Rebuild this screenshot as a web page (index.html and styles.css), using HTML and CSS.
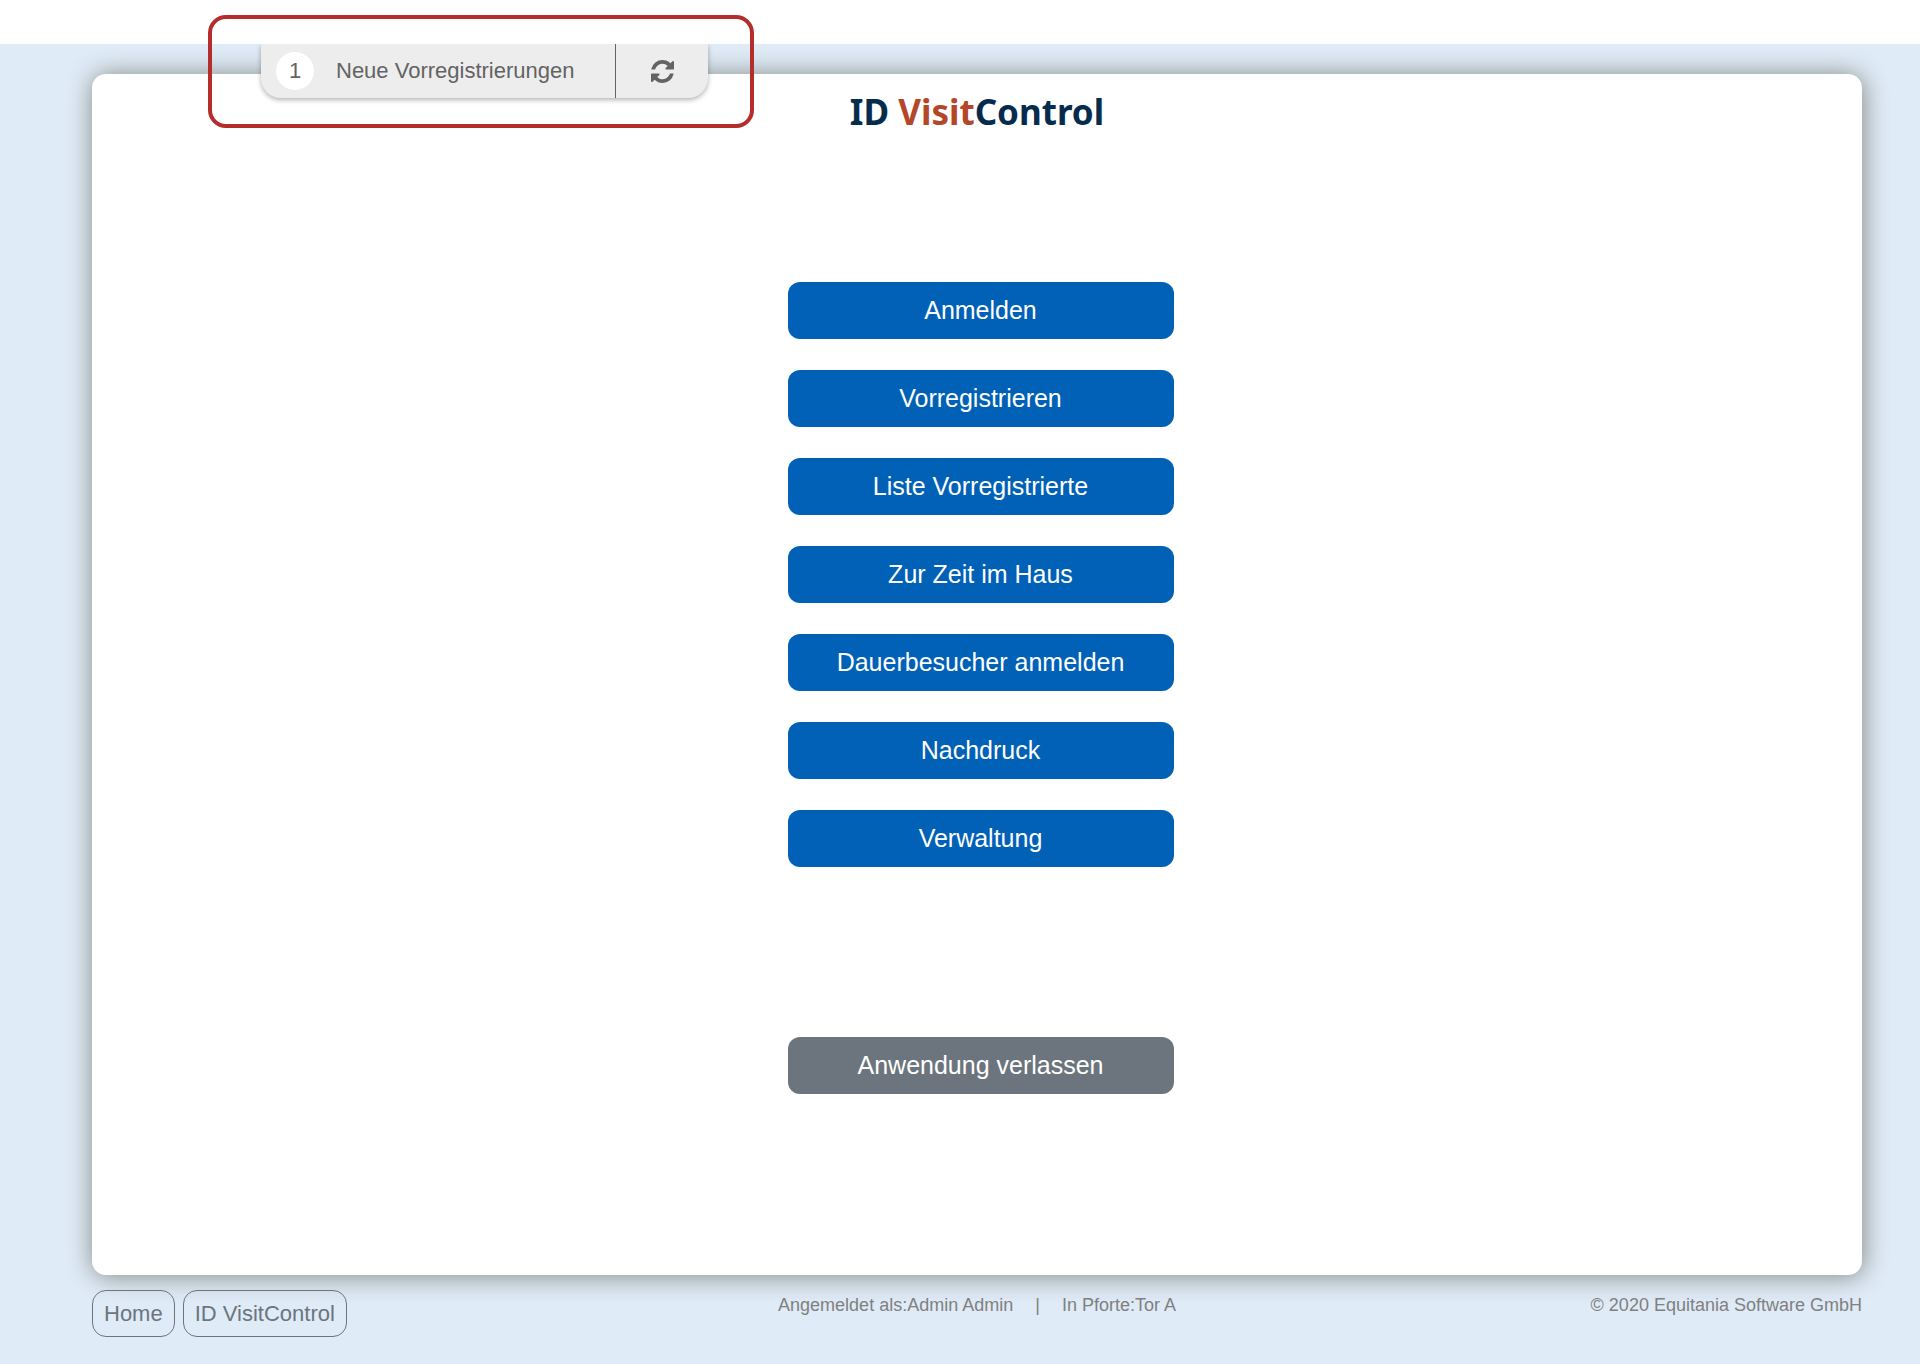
FILE: index.html
```html
<!DOCTYPE html>
<html lang="de">
  <head>
    <meta charset="utf-8">
    <title>ID VisitControl</title>
    <link rel="stylesheet" href="styles.css">
  </head>

  <body>
    <div class="topbar"></div>
    <div class="page">
      <div class="highlight">
        <div class="notice">
          <button class="notice-text" type="button">
            <span class="count">1</span>
            <span>Neue Vorregistrierungen</span>
          </button>
          <button class="refresh" type="button" aria-label="Aktualisieren">
            <svg viewBox="0 0 1536 1536" width="23" height="23">
              <path fill="currentColor" d="M1511 928q0 5-1 7-64 268-268 434.500T764 1536q-146 0-282.500-55T238 1324l-129 129q-19 19-45 19t-45-19-19-45V960q0-26 19-45t45-19h448q26 0 45 19t19 45-19 45l-137 137q71 66 161 102t187 36q134 0 250-65t186-179q11-17 53-117 8-23 30-23h192q13 0 22.500 9.500t9.500 22.500zm25-800v448q0 26-19 45t-45 19h-448q-26 0-45-19t-19-45 19-45l138-138Q969 256 768 256q-134 0-250 65T332 500q-11 17-53 117-8 23-30 23H50q-13 0-22.500-9.500T18 608v-7q65-268 270-434.500T768 0q146 0 284 55.500T1297 212l130-129q19-19 45-19t45 19 19 45z"/>
            </svg>
          </button>
        </div>
      </div>

      <main class="card">
        <h1 class="logo">ID <span>Visit</span>Control</h1>
        <nav class="menu">
          <button class="btn" type="button">Anmelden</button>
          <button class="btn" type="button">Vorregistrieren</button>
          <button class="btn" type="button">Liste Vorregistrierte</button>
          <button class="btn" type="button">Zur Zeit im Haus</button>
          <button class="btn" type="button">Dauerbesucher anmelden</button>
          <button class="btn" type="button">Nachdruck</button>
          <button class="btn" type="button">Verwaltung</button>
          <button class="btn exit" type="button">Anwendung verlassen</button>
        </nav>
      </main>

      <footer class="footer">
        <div class="crumbs">
          <a class="crumb" href="#">Home</a>
          <a class="crumb" href="#">ID VisitControl</a>
        </div>
        <div class="status">
          <span>Angemeldet als:Admin Admin</span>
          <span>|</span>
          <span>In Pforte:Tor A</span>
        </div>
        <div class="copyright">© 2020 Equitania Software GmbH</div>
      </footer>
    </div>
  </body>
</html>
```
FILE: styles.css
```css
* {
  box-sizing: border-box;
}

body {
  margin: 0;
  min-height: 100vh;
  display: flex;
  flex-direction: column;
  background-color: white;
  font-family: "Liberation Sans", Arial, sans-serif;
}

button {
  border: none;
  font-family: inherit;
  cursor: pointer;
}

.topbar {
  height: 44px;
}

.page {
  position: relative;
  flex: 1;
  display: flex;
  flex-direction: column;
  padding: 30px 58px 0 92px;
  background-color: #dfebf7;
}

/* red frame around the notice tab, lies over the card */
.highlight {
  position: absolute;
  top: -29px;
  left: 208px;
  z-index: 1;
  padding: 25px 42px 26px 49px;
  border: 4px solid #b42d2a;
  border-radius: 18px;
}

.notice {
  display: flex;
  height: 54px;
  border-radius: 0 0 20px 20px;
  background-color: #ededed;
  box-shadow: 0 2px 5px rgba(0, 0, 0, 0.3);
  clip-path: inset(0 -10px -10px -10px);
}

.notice-text {
  display: flex;
  align-items: center;
  gap: 22px;
  padding: 0 41px 0 15px;
  background: none;
  color: #636363;
  font-size: 22px;
}

.count {
  width: 38px;
  height: 38px;
  border-radius: 50%;
  background-color: white;
  line-height: 38px;
}

.refresh {
  display: flex;
  align-items: center;
  justify-content: center;
  width: 93px;
  padding: 0;
  border-left: 1px solid #636363;
  background: none;
  color: #636363;
}

.card {
  flex: 1;
  display: flex;
  flex-direction: column;
  align-items: center;
  padding: 16px 0 180px;
  border-radius: 14px;
  background-color: white;
  box-shadow: 1px 1px 26px #838680;
}

.logo {
  margin: 0;
  color: #062b4c;
  font-family: "Noto Sans", sans-serif;
  font-size: 35px;
  font-weight: bold;
  line-height: 44px;
}

.logo span {
  color: #b4462a;
}

.menu {
  display: flex;
  flex-direction: column;
  gap: 31px;
  margin-top: 148px;
  padding-left: 7px;
}

.btn {
  width: 386px;
  height: 57px;
  padding: 0;
  border-radius: 12px;
  background-color: #0061b6;
  color: white;
  font-size: 25px;
}

.exit {
  margin-top: 139px;
  background-color: #6c757d;
}

.footer {
  display: grid;
  grid-template-columns: 1fr auto 1fr;
  padding: 15px 0 27px;
  color: #808080;
  font-size: 18px;
  line-height: 30px;
}

.crumbs {
  display: flex;
  gap: 8px;
}

.crumb {
  padding: 0 11px;
  border: 1px solid #6c757d;
  border-radius: 14px;
  color: #6c757d;
  font-size: 22px;
  line-height: 45px;
  text-decoration: none;
}

.status {
  display: flex;
  gap: 22px;
}

.copyright {
  text-align: right;
}
```
